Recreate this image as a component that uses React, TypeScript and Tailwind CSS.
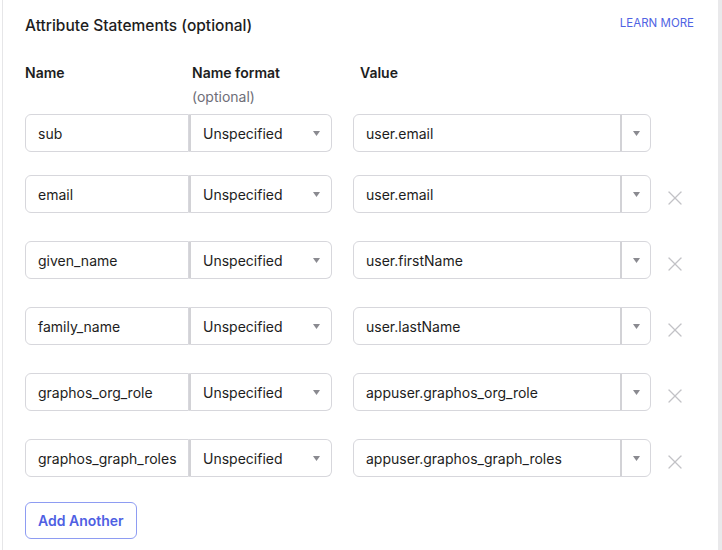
import { X } from 'lucide-react';

const ROWS = [
  { name: 'sub', value: 'user.email', removable: false },
  { name: 'email', value: 'user.email', removable: true },
  { name: 'given_name', value: 'user.firstName', removable: true },
  { name: 'family_name', value: 'user.lastName', removable: true },
  { name: 'graphos_org_role', value: 'appuser.graphos_org_role', removable: true },
  { name: 'graphos_graph_roles', value: 'appuser.graphos_graph_roles', removable: true },
];

function Caret() {
  return (
    <svg width="7" height="5" viewBox="0 0 7 5" className="shrink-0">
      <path d="M0 0h7L3.5 5z" fill="#8a8a90" />
    </svg>
  );
}

function AttributeRow({ name, value, removable }: { name: string; value: string; removable: boolean }) {
  return (
    <div className="flex items-center">
      {/* name + format joined group */}
      <div className="flex h-[38px]">
        <div className="flex w-[164px] items-center rounded-l-[6px] border border-[#d7d7dc] pl-3 text-[14px] text-[#1d1d21]">
          {name}
        </div>
        <div className="flex w-[143px] items-center justify-between rounded-r-[6px] border border-l-2 border-[#d7d7dc] border-l-[#d2d2d6] pl-3 pr-[11px] text-[14px] text-[#1d1d21]">
          <span>Unspecified</span>
          <Caret />
        </div>
      </div>

      <div className="ml-[21px] flex h-[38px] w-[298px] rounded-[6px] border border-[#d7d7dc] text-[14px] text-[#1d1d21]">
        <div className="flex flex-1 items-center pl-3">{value}</div>
        <div className="flex w-[30px] items-center justify-center border-l-2 border-[#d2d2d6]">
          <Caret />
        </div>
      </div>

      {removable && (
        <div className="ml-[12px] mt-[7px] flex h-6 w-6 items-center justify-center">
          <X size={24} strokeWidth={1.3} color="#c2c2c6" />
        </div>
      )}
    </div>
  );
}

export default function App() {
  return (
    <div className="flex h-[550px] w-[722px] bg-white font-['Inter',sans-serif]">
      <div className="w-[2px] shrink-0 bg-white" />
      <div className="flex-1 border-l border-[#e6e6e8] bg-white pl-[22px] pr-[24px]">
        <div className="flex items-start justify-between pt-[16px]">
          <h2 className="text-[15.5px] font-medium leading-[20px] text-[#1d1d21]">
            Attribute Statements (optional)
          </h2>
          <a className="mt-[-1px] text-[11.5px] leading-[16px] text-[#4f63e3]">LEARN MORE</a>
        </div>

        <div className="mt-[27px] flex text-[14px] leading-[20px]">
          <div className="w-[167px] font-semibold text-[#1d1d21]">Name</div>
          <div className="w-[168px]">
            <div className="font-semibold text-[#1d1d21]">Name format</div>
            <div className="mt-[4px] text-[#6e6e78]">(optional)</div>
          </div>
          <div className="font-semibold text-[#1d1d21]">Value</div>
        </div>

        <div className="mt-[7px] flex flex-col">
          {ROWS.map((row, i) => (
            <div key={row.name} className={i === 0 ? '' : i === 1 ? 'mt-[23px]' : 'mt-[28px]'}>
              <AttributeRow {...row} />
            </div>
          ))}
        </div>

        <button className="mt-[25px] h-[37px] rounded-[6px] border border-[#8e9cf2] px-3 text-[14px] font-semibold text-[#4f5fe3]">
          Add Another
        </button>
      </div>
      <div className="w-[4px] shrink-0 bg-[#e9e9eb]" />
    </div>
  );
}
